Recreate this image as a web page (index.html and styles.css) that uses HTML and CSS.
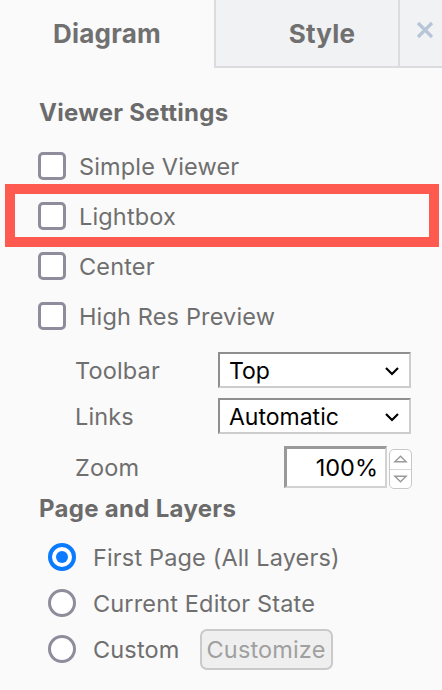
FILE: index.html
```html
<!DOCTYPE html>
<html>
<head>
<meta charset="utf-8">
<link rel="stylesheet" href="styles.css">
</head>
<body>
<div class="panel">
  <div class="tabs">
    <div class="tab tab-active">Diagram</div>
    <div class="tab tab-inactive">Style</div>
    <div class="tab-fill"></div>
    <div class="close">
      <svg width="18" height="18" viewBox="0 0 18 18"><path d="M2 2 L16 16 M16 2 L2 16" stroke="#b7c5d8" stroke-width="3.2" stroke-linecap="butt"/></svg>
    </div>
  </div>

  <div class="content">
    <div class="section-title first">Viewer Settings</div>
    <div class="check-row"><span class="checkbox"></span><span class="label">Simple Viewer</span></div>
    <div class="check-row"><span class="checkbox"></span><span class="label">Lightbox</span></div>
    <div class="check-row"><span class="checkbox"></span><span class="label">Center</span></div>
    <div class="check-row"><span class="checkbox"></span><span class="label">High Res Preview</span></div>

    <div class="field-row row-toolbar">
      <span class="field-label">Toolbar</span>
      <div class="select"><span>Top</span>
        <svg class="chev" width="16" height="10" viewBox="0 0 16 10"><path d="M2 2 L8 8 L14 2" fill="none" stroke="#000" stroke-width="2.2"/></svg>
      </div>
    </div>
    <div class="field-row row-links">
      <span class="field-label">Links</span>
      <div class="select"><span>Automatic</span>
        <svg class="chev" width="16" height="10" viewBox="0 0 16 10"><path d="M2 2 L8 8 L14 2" fill="none" stroke="#000" stroke-width="2.2"/></svg>
      </div>
    </div>
    <div class="field-row row-zoom">
      <span class="field-label zoom-label">Zoom</span>
      <div class="zoom-input">100%</div>
      <div class="spinner">
        <div class="spin-half spin-up">
          <svg width="16" height="10" viewBox="0 0 16 10"><path d="M2 8 L8 2 L14 8 Z" fill="#fff" stroke="#9a9a9a" stroke-width="1.5"/></svg>
        </div>
        <div class="spin-half spin-down">
          <svg width="16" height="10" viewBox="0 0 16 10"><path d="M2 2 L8 8 L14 2 Z" fill="#fff" stroke="#9a9a9a" stroke-width="1.5"/></svg>
        </div>
      </div>
    </div>

    <div class="section-title second">Page and Layers</div>
    <div class="radio-row"><span class="radio checked"></span><span class="label">First Page (All Layers)</span></div>
    <div class="radio-row"><span class="radio"></span><span class="label">Current Editor State</span></div>
    <div class="radio-row"><span class="radio"></span><span class="label">Custom</span><span class="btn">Customize</span></div>
  </div>

  <div class="highlight"></div>
</div>
</body>
</html>
```

FILE: styles.css
```css
html, body {
  margin: 0;
  padding: 0;
  background: #fafafa;
}
body {
  font-family: Inter, "Liberation Sans", sans-serif;
  color: #6f6f6f;
}
.panel {
  position: relative;
  width: 442px;
  height: 690px;
  overflow: hidden;
}
.tabs {
  display: grid;
  grid-template-columns: 214px 214px 1fr;
  height: 68px;
  position: relative;
}
.tab {
  display: flex;
  align-items: center;
  justify-content: center;
  font-weight: 700;
  font-size: 26px;
  letter-spacing: 0.2px;
  color: #707070;
  box-sizing: border-box;
}
.tab-active {
  background: #fafafa;
  padding-bottom: 1px;
}
.tab-inactive {
  background: #f1f2f4;
  border-left: 2px solid #dcdce0;
  border-bottom: 2px solid #dcdce0;
  padding-top: 1px;
}
.tab-fill {
  background: #f1f2f4;
  border-bottom: 2px solid #dcdce0;
}
.close {
  position: absolute;
  left: 398px;
  top: 0;
  width: 44px;
  height: 66px;
  box-sizing: border-box;
  border-left: 2px solid #dcdce0;
  background: #f1f2f4;
  display: flex;
  align-items: flex-start;
  justify-content: flex-start;
  padding-left: 16px;
  padding-top: 21px;
}
.content {
  padding-left: 38px;
  display: flex;
  flex-direction: column;
}
.section-title {
  font-weight: 700;
  font-size: 24px;
  letter-spacing: 0.3px;
  color: #6b6b6b;
  height: 34px;
  line-height: 34px;
  padding-left: 1px;
}
.section-title.first {
  margin-top: 28px;
}
.section-title.second {
  margin-top: 4px;
}
.check-row {
  display: flex;
  align-items: center;
  height: 50px;
}
.section-title.first + .check-row {
  margin-top: 11px;
}
.checkbox {
  width: 28px;
  height: 28px;
  box-sizing: border-box;
  border: 3px solid #8f8c9b;
  border-radius: 5px;
  background: #fff;
  flex: none;
  margin-right: 13px;
}
.label {
  font-size: 23.5px;
  letter-spacing: 0.15px;
  color: #6f6f6f;
  white-space: nowrap;
}
.field-row {
  display: flex;
  align-items: center;
  padding-left: 37px;
}
.field-label {
  width: 143px;
  font-size: 23.5px;
  letter-spacing: 0.15px;
  color: #6f6f6f;
  flex: none;
}
.row-toolbar {
  margin-top: 11px;
  height: 36px;
}
.row-links {
  margin-top: 10px;
  height: 36px;
}
.row-zoom {
  margin-top: 12px;
  height: 42px;
}
.select {
  width: 193px;
  height: 36px;
  box-sizing: border-box;
  border-style: solid;
  border-width: 2px;
  border-color: #8e8e8e #cdcdcd #cdcdcd #8e8e8e;
  background: #fff;
  display: flex;
  align-items: center;
  justify-content: space-between;
  padding: 2px 9px 0 9px;
  font-size: 23px;
  color: #000;
}
.chev {
  display: block;
}
.zoom-label {
  width: 209px;
}
.zoom-input {
  width: 103px;
  height: 42px;
  box-sizing: border-box;
  border-style: solid;
  border-width: 3px 2px 2px 3px;
  border-color: #999 #d2d2d2 #d2d2d2 #999;
  background: #fff;
  font-size: 23.5px;
  color: #000;
  display: flex;
  align-items: center;
  justify-content: flex-end;
  padding-right: 7px;
}
.spinner {
  margin-left: 2px;
  width: 23px;
  height: 40px;
  box-sizing: border-box;
  border: 1.5px solid #c8c8c8;
  border-radius: 5px;
  background: #fff;
  display: flex;
  flex-direction: column;
  margin-top: 4px;
}
.spin-half {
  flex: 1;
  display: flex;
  align-items: center;
  justify-content: center;
}
.spin-up {
  border-bottom: 1px solid #d6d6d6;
}
.spin-half svg {
  width: 15px;
  height: 10px;
}
.radio-row {
  display: flex;
  align-items: center;
  height: 46px;
  padding-left: 10px;
}
.section-title.second + .radio-row {
  margin-top: 8px;
}
.radio {
  width: 28px;
  height: 28px;
  box-sizing: border-box;
  border-radius: 50%;
  border: 3.5px solid #8f8c9b;
  background: #fff;
  flex: none;
  margin-right: 17px;
  position: relative;
}
.radio.checked {
  border: 4px solid #0a7aff;
}
.radio.checked::after {
  content: "";
  position: absolute;
  left: 4px;
  top: 4px;
  width: 12px;
  height: 12px;
  border-radius: 50%;
  background: #0a7aff;
}
.btn {
  margin-left: 20px;
  height: 41px;
  box-sizing: border-box;
  border: 2px solid #cacaca;
  border-radius: 7px;
  background: #efefef;
  color: #a0a0a0;
  font-size: 23.5px;
  letter-spacing: 0.15px;
  display: flex;
  align-items: center;
  padding: 0 5px;
}
.highlight {
  position: absolute;
  left: 5px;
  top: 184px;
  width: 434px;
  height: 63px;
  box-sizing: border-box;
  border: 10px solid #ff5a4f;
}
```
